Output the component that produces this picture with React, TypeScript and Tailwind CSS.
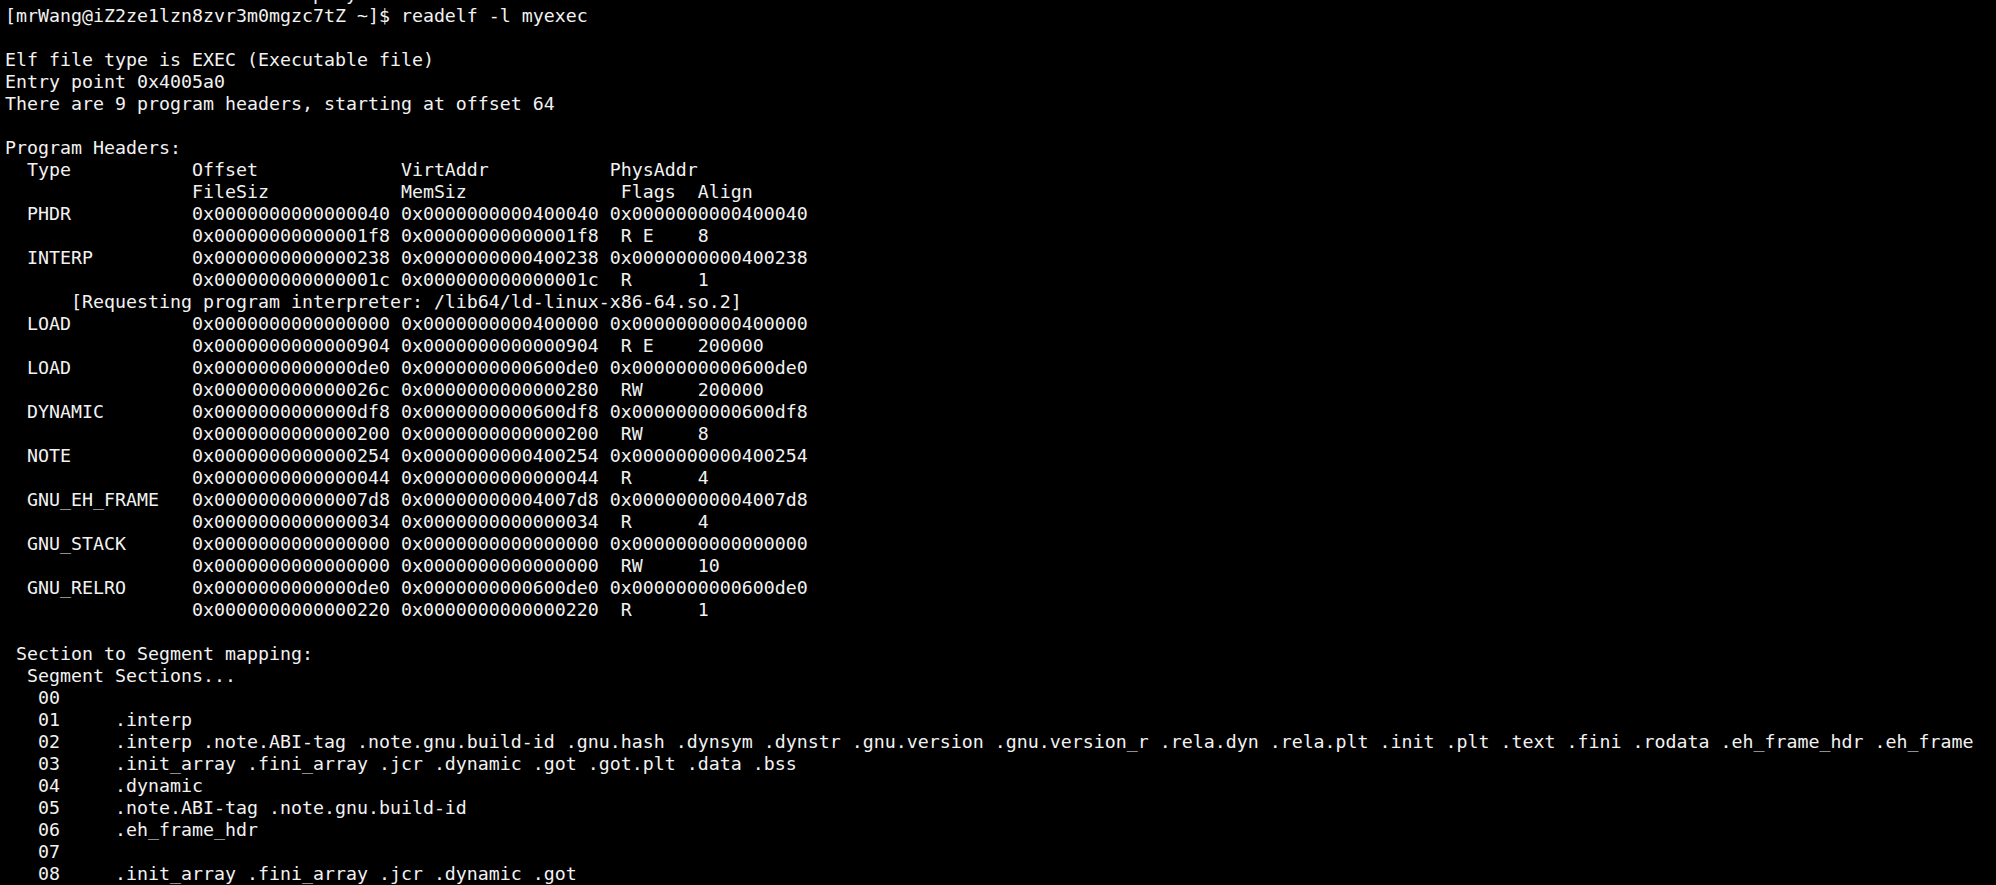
import React from 'react';

const lines: string[] = [
  '[mrWang@iZ2ze1lzn8zvr3m0mgzc7tZ ~]$ readelf -l myexec',
  '',
  'Elf file type is EXEC (Executable file)',
  'Entry point 0x4005a0',
  'There are 9 program headers, starting at offset 64',
  '',
  'Program Headers:',
  '  Type           Offset             VirtAddr           PhysAddr',
  '                 FileSiz            MemSiz              Flags  Align',
  '  PHDR           0x0000000000000040 0x0000000000400040 0x0000000000400040',
  '                 0x00000000000001f8 0x00000000000001f8  R E    8',
  '  INTERP         0x0000000000000238 0x0000000000400238 0x0000000000400238',
  '                 0x000000000000001c 0x000000000000001c  R      1',
  '      [Requesting program interpreter: /lib64/ld-linux-x86-64.so.2]',
  '  LOAD           0x0000000000000000 0x0000000000400000 0x0000000000400000',
  '                 0x0000000000000904 0x0000000000000904  R E    200000',
  '  LOAD           0x0000000000000de0 0x0000000000600de0 0x0000000000600de0',
  '                 0x000000000000026c 0x0000000000000280  RW     200000',
  '  DYNAMIC        0x0000000000000df8 0x0000000000600df8 0x0000000000600df8',
  '                 0x0000000000000200 0x0000000000000200  RW     8',
  '  NOTE           0x0000000000000254 0x0000000000400254 0x0000000000400254',
  '                 0x0000000000000044 0x0000000000000044  R      4',
  '  GNU_EH_FRAME   0x00000000000007d8 0x00000000004007d8 0x00000000004007d8',
  '                 0x0000000000000034 0x0000000000000034  R      4',
  '  GNU_STACK      0x0000000000000000 0x0000000000000000 0x0000000000000000',
  '                 0x0000000000000000 0x0000000000000000  RW     10',
  '  GNU_RELRO      0x0000000000000de0 0x0000000000600de0 0x0000000000600de0',
  '                 0x0000000000000220 0x0000000000000220  R      1',
  '',
  ' Section to Segment mapping:',
  '  Segment Sections...',
  '   00     ',
  '   01     .interp ',
  '   02     .interp .note.ABI-tag .note.gnu.build-id .gnu.hash .dynsym .dynstr .gnu.version .gnu.version_r .rela.dyn .rela.plt .init .plt .text .fini .rodata .eh_frame_hdr .eh_frame ',
  '   03     .init_array .fini_array .jcr .dynamic .got .got.plt .data .bss ',
  '   04     .dynamic ',
  '   05     .note.ABI-tag .note.gnu.build-id ',
  '   06     .eh_frame_hdr ',
  '   07     ',
  '   08     .init_array .fini_array .jcr .dynamic .got ',
];

export default function App() {
  return (
    <div className="w-[1996px] h-[885px] overflow-hidden bg-black pl-[5px] pt-[5px] text-[#f2f2f2] font-['DejaVu_Sans_Mono',monospace] text-[18.27px] leading-[22px]">
      {/* tail of the previous command, clipped by the window top */}
      <div className="-mt-[22px] whitespace-pre">{'                            p  y'}</div>
      {lines.map((l, i) => (
        <div key={i} className="whitespace-pre h-[22px]">
          {l}
        </div>
      ))}
    </div>
  );
}
